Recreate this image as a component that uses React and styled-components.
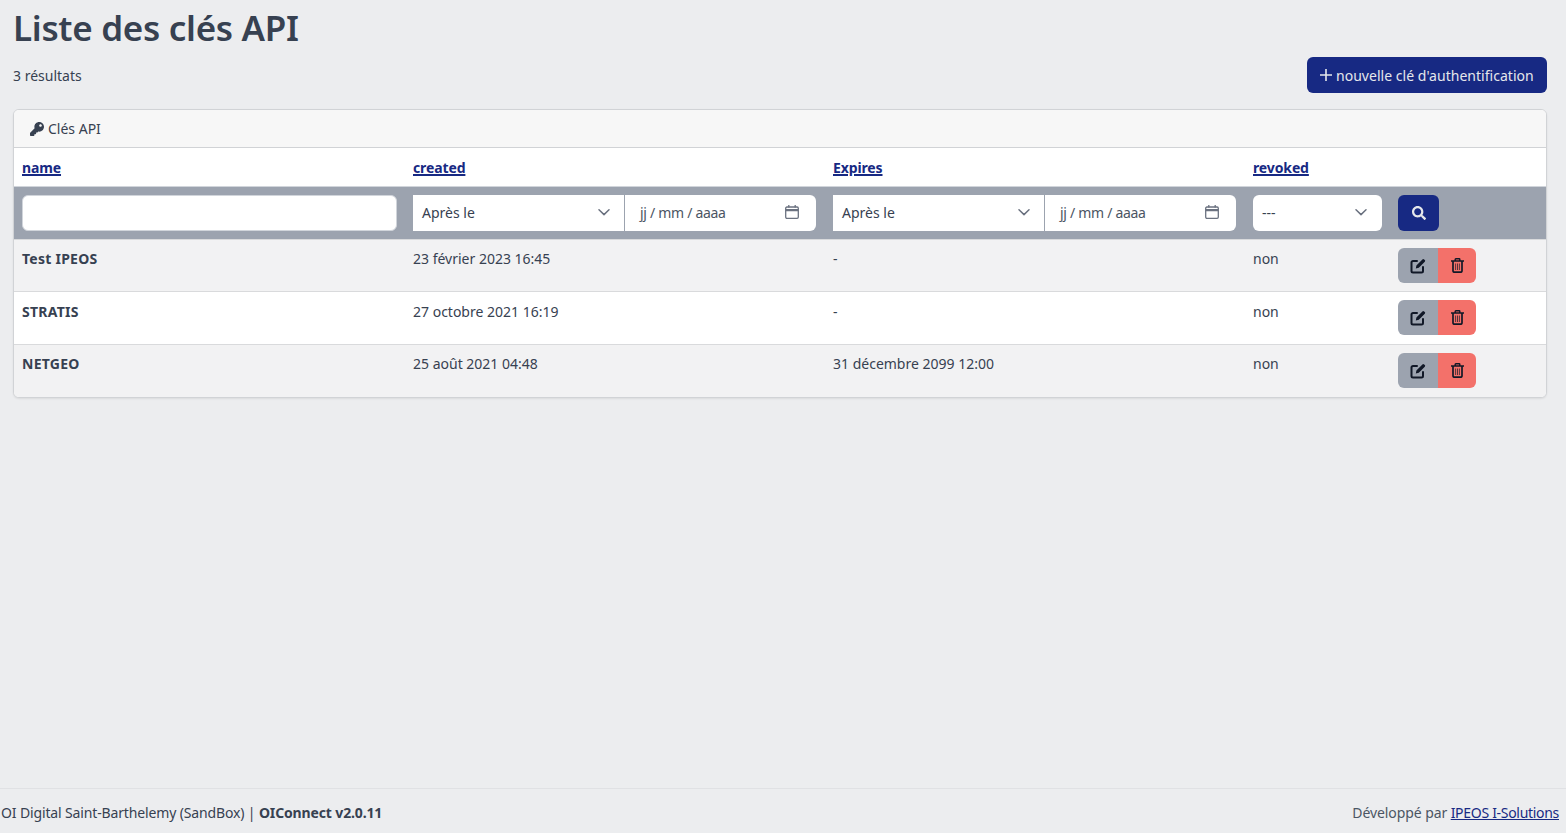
import React from 'react';
import styled, { createGlobalStyle } from 'styled-components';
import { FaKey, FaSearch } from 'react-icons/fa';

const GlobalStyle = createGlobalStyle`
  html, body { margin: 0; padding: 0; height: 100%; }
  body {
    background: #ecedef;
    color: #374151;
    font-family: "Noto Sans", "Open Sans", sans-serif;
    font-size: 14px;
  }
  #root { height: 100%; }
`;

const Page = styled.div`
  height: 833px;
  display: flex;
  flex-direction: column;
`;

const Main = styled.main`
  flex: 1;
  padding: 0 19px 0 13px;
`;

const Title = styled.h1`
  margin: 0;
  height: 57px;
  font-size: 35px;
  line-height: 55px;
  font-weight: 600;
  letter-spacing: -0.3px;
  color: #374151;
`;

const Toolbar = styled.div`
  display: flex;
  justify-content: space-between;
  align-items: center;
  height: 36px;
  margin-bottom: 16px;
`;

const NewButton = styled.button`
  display: flex;
  align-items: center;
  gap: 4px;
  height: 36px;
  width: 240px;
  padding: 0 13px;
  border: none;
  border-radius: 6px;
  background: #172983;
  color: #e5e7eb;
  font: inherit;
  letter-spacing: 0.03px;
  white-space: nowrap;
`;

const PlusGlyph = styled.svg`
  width: 12px;
  height: 12px;
  flex: none;
`;

const Card = styled.section`
  border: 1px solid #d1d3d6;
  border-radius: 6px;
  background: #fff;
  overflow: hidden;
  box-shadow: 0 1px 2px rgba(0, 0, 0, 0.08);
`;

const CardHeader = styled.header`
  display: flex;
  align-items: center;
  gap: 4px;
  height: 37px;
  padding: 0 16px;
  background: #f7f7f7;
  border-bottom: 1px solid #d1d3d6;
`;

const Table = styled.table`
  width: 100%;
  table-layout: fixed;
  border-collapse: separate;
  border-spacing: 0;
`;

const HeadCell = styled.th`
  height: 39px;
  padding: 0 8px;
  text-align: left;
  font-weight: 700;
  letter-spacing: -0.12px;
  box-shadow: inset 0 -1px 0 #d1d5db;
  a {
    color: #172983;
    text-decoration: underline;
    text-decoration-thickness: 2px;
    text-underline-offset: 1px;
  }
`;

const FilterRow = styled.tr`
  background: #9ca3af;
`;

const FilterCell = styled.td`
  height: 52px;
  padding: 0 8px;
`;

const FilterGroup = styled.div`
  display: flex;
  width: 403px;
  height: 36px;
`;

const TextInput = styled.div`
  height: 36px;
  box-sizing: border-box;
  background: #fff;
  border: 1px solid #d1d5db;
  border-radius: 6px;
`;

const SelectBox = styled.div`
  display: flex;
  align-items: center;
  justify-content: space-between;
  box-sizing: border-box;
  width: ${p => p.$width}px;
  height: 36px;
  padding: 0 ${p => (p.$alone ? 15 : 14)}px 2px 9px;
  background: #fff;
  border-radius: ${p => (p.$alone ? '6px' : '0')};
  border-right: ${p => (p.$alone ? 'none' : '1px solid #9ca3af')};
`;

const DateBox = styled.div`
  display: flex;
  flex: 1;
  align-items: center;
  justify-content: space-between;
  box-sizing: border-box;
  height: 36px;
  padding: 0 17px 2px 15px;
  background: #fff;
  border-radius: 0 6px 6px 0;
  color: #4b5563;
  letter-spacing: -0.3px;
`;

const SearchButton = styled.button`
  display: flex;
  align-items: center;
  justify-content: center;
  width: 41px;
  height: 36px;
  padding: 0;
  border: none;
  border-radius: 6px;
  background: #172983;
  color: #e5e7eb;
  font-size: 14px;
`;

const Row = styled.tr`
  background: ${p => (p.$odd ? '#f2f2f3' : '#fff')};
`;

const Cell = styled.td`
  height: ${p => p.$height}px;
  padding: ${p => p.$top}px 8px 0;
  box-sizing: border-box;
  border-top: 1px solid #d9dadc;
  vertical-align: top;
  line-height: 20px;
  font-weight: ${p => (p.$bold ? 700 : 400)};
  letter-spacing: ${p => (p.$bold ? '0.25px' : '0')};
`;

const ActionCell = styled.td`
  height: ${p => p.$height}px;
  padding: 8px 8px 0;
  box-sizing: border-box;
  border-top: 1px solid #d9dadc;
  vertical-align: top;
`;

const ActionGroup = styled.div`
  display: flex;
  width: 78px;
  height: 35px;
  border-radius: 6px;
  overflow: hidden;
`;

const ActionButton = styled.button`
  display: flex;
  align-items: center;
  justify-content: center;
  width: ${p => p.$width}px;
  padding: 0;
  border: none;
  background: ${p => p.$bg};
`;

const Footer = styled.footer`
  display: flex;
  justify-content: space-between;
  align-items: center;
  height: 45px;
  box-sizing: border-box;
  padding: 2px 7px 0 1px;
  border-top: 1px solid #e0e1e4;
  letter-spacing: -0.14px;
  a {
    color: #172983;
    text-decoration: underline;
    letter-spacing: -0.3px;
  }
`;

const Muted = styled.span`
  color: #4b5563;
  letter-spacing: -0.09px;
`;

const Chevron = () => (
  <svg width="12" height="12" viewBox="0 0 12 12" fill="none" stroke="#6b7280" strokeWidth="1.5" strokeLinecap="round" strokeLinejoin="round">
    <path d="M1 3.8 6 8.6l5-4.8" />
  </svg>
);

const CalendarIcon = () => (
  <svg width="14" height="14" viewBox="0 0 14 14" fill="none" stroke="#6b7280" strokeWidth="1.3">
    <rect x="0.7" y="2" width="12.6" height="11.3" rx="1.2" />
    <path d="M0.7 5.2h12.6" strokeWidth="2.2" />
    <path d="M3.8 0v2.6M10.2 0v2.6" />
  </svg>
);

const EditIcon = () => (
  <svg width="16" height="16" viewBox="0 0 16 16" fill="none" stroke="#111827">
    <path d="M7 3H3a1.5 1.5 0 0 0-1.5 1.5V13A1.5 1.5 0 0 0 3 14.5h8.5A1.5 1.5 0 0 0 13 13V9" strokeWidth="2" strokeLinecap="round" />
    <path d="M5.8 10.4l.6-3L12.4 1.4a1.2 1.2 0 0 1 1.7 0l.7.7a1.2 1.2 0 0 1 0 1.7L8.8 9.8z" fill="#111827" stroke="none" />
  </svg>
);

const TrashIcon = () => (
  <svg width="13" height="15" viewBox="0 0 13 15" fill="none" stroke="#111827">
    <path d="M0.5 3h12" strokeWidth="1.6" strokeLinecap="round" />
    <path d="M4.2 3V1.3a.6.6 0 0 1 .6-.6h3.4a.6.6 0 0 1 .6.6V3" strokeWidth="1.4" />
    <path d="M2 3v10a1.2 1.2 0 0 0 1.2 1.2h6.6A1.2 1.2 0 0 0 11 13V3" strokeWidth="1.7" />
    <path d="M4.6 5.5V12M6.5 5.5V12M8.4 5.5V12" strokeWidth="1" opacity="0.7" />
  </svg>
);

const DateFilter = () => (
  <FilterGroup>
    <SelectBox $width={212}>Après le<Chevron /></SelectBox>
    <DateBox>jj / mm / aaaa<CalendarIcon /></DateBox>
  </FilterGroup>
);

// the original rows are 52.5px high, height and top follow how they snap to pixels
const keys = [
  { name: 'Test IPEOS', created: '23 février 2023 16:45', expires: '-', height: 52, top: 9 },
  { name: 'STRATIS', created: '27 octobre 2021 16:19', expires: '-', height: 53, top: 10 },
  { name: 'NETGEO', created: '25 août 2021 04:48', expires: '31 décembre 2099 12:00', height: 53, top: 9 },
];

export default function App() {
  return (
    <Page>
      <GlobalStyle />
      <Main>
        <Title>Liste des clés API</Title>
        <Toolbar>
          <span>3 résultats</span>
          <NewButton>
            <PlusGlyph viewBox="0 0 12 12" stroke="#e5e7eb" strokeWidth="1.6">
              <path d="M6 0v12M0 6h12" />
            </PlusGlyph>
            nouvelle clé d'authentification
          </NewButton>
        </Toolbar>
        <Card>
          <CardHeader><FaKey size={14} />Clés API</CardHeader>
          <Table>
            <colgroup>
              <col style={{ width: 391 }} />
              <col style={{ width: 420 }} />
              <col style={{ width: 420 }} />
              <col style={{ width: 145 }} />
              <col />
            </colgroup>
            <thead>
              <tr>
                <HeadCell><a href="#name">name</a></HeadCell>
                <HeadCell><a href="#created">created</a></HeadCell>
                <HeadCell><a href="#expires">Expires</a></HeadCell>
                <HeadCell><a href="#revoked">revoked</a></HeadCell>
                <HeadCell />
              </tr>
              <FilterRow>
                <FilterCell><TextInput /></FilterCell>
                <FilterCell><DateFilter /></FilterCell>
                <FilterCell><DateFilter /></FilterCell>
                <FilterCell>
                  <SelectBox $width={129} $alone>---<Chevron /></SelectBox>
                </FilterCell>
                <FilterCell>
                  <SearchButton aria-label="Rechercher"><FaSearch /></SearchButton>
                </FilterCell>
              </FilterRow>
            </thead>
            <tbody>
              {keys.map((key, i) => (
                <Row key={key.name} $odd={i % 2 === 0}>
                  <Cell $height={key.height} $top={key.top} $bold>{key.name}</Cell>
                  <Cell $height={key.height} $top={key.top}>{key.created}</Cell>
                  <Cell $height={key.height} $top={key.top}>{key.expires}</Cell>
                  <Cell $height={key.height} $top={key.top}>non</Cell>
                  <ActionCell $height={key.height}>
                    <ActionGroup>
                      <ActionButton $width={40} $bg="#9ca3af" aria-label="Modifier"><EditIcon /></ActionButton>
                      <ActionButton $width={38} $bg="#f3716a" aria-label="Supprimer"><TrashIcon /></ActionButton>
                    </ActionGroup>
                  </ActionCell>
                </Row>
              ))}
            </tbody>
          </Table>
        </Card>
      </Main>
      <Footer>
        <span>OI Digital Saint-Barthelemy (SandBox) | <strong>OIConnect v2.0.11</strong></span>
        <Muted>Développé par <a href="#ipeos">IPEOS I-Solutions</a></Muted>
      </Footer>
    </Page>
  );
}
